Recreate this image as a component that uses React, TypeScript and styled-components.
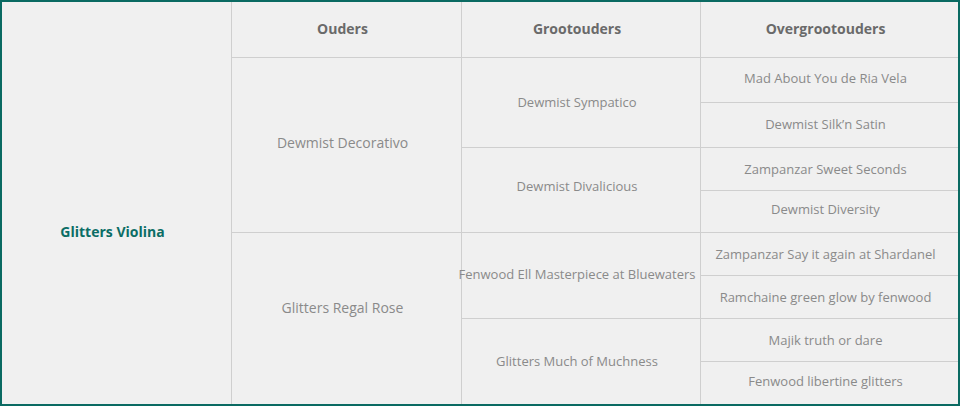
import React from 'react';
import styled, {createGlobalStyle} from 'styled-components';

const GlobalStyle = createGlobalStyle`
  html, body {
    margin: 0;
    padding: 0;
    background: #ffffff;
  }
  * {
    box-sizing: border-box;
  }
`;

type Generation = 'self' | 'parent' | 'grand' | 'great';

type Horse = {name: string; lift: number};

const Pedigree = styled.div`
  width: 960px;
  border: 2px solid #0a6a62;
  background: #f0f0f0;
  display: grid;
  grid-template-columns: 229px 230px 239px 258px;
  grid-template-rows: 55px 45px 45px 43px 42px 43px 43px 43px 43px;
  font-family: 'Open Sans', 'DejaVu Sans', sans-serif;
`;

const HeaderCell = styled.div<{$col: number; $first?: boolean}>`
  grid-column: ${p => p.$col};
  grid-row: 1;
  display: flex;
  align-items: center;
  justify-content: center;
  padding: 0 8px 2px 0;
  border-left: ${p => (p.$first ? 'none' : '1px solid #cfcfcf')};
  font-size: 14px;
  font-weight: 700;
  color: #6a6a6a;
`;

// lift: how many px the name sits above the middle of its cell
const Cell = styled.div<{
  $col: number;
  $row: number;
  $span: number;
  $gen: Generation;
  $lift: number;
}>`
  grid-column: ${p => p.$col};
  grid-row: ${p => p.$row} / span ${p => p.$span};
  display: flex;
  align-items: center;
  justify-content: center;
  text-align: center;
  white-space: nowrap;
  padding-right: 8px;
  padding-top: ${p => (p.$lift < 0 ? -p.$lift * 2 : 0)}px;
  padding-bottom: ${p => (p.$lift > 0 ? p.$lift * 2 : 0)}px;
  border-left: ${p => (p.$gen === 'self' ? 'none' : '1px solid #cfcfcf')};
  border-top: ${p => (p.$gen === 'self' ? 'none' : '1px solid #cfcfcf')};
  font-size: ${p => (p.$gen === 'self' || p.$gen === 'parent' ? '14px' : '13px')};
  font-weight: ${p => (p.$gen === 'self' ? 700 : 400)};
  color: ${p => (p.$gen === 'self' ? '#0b6d65' : '#8a8a8a')};
`;

const parents: Horse[] = [
  {name: 'Dewmist Decorativo', lift: 3},
  {name: 'Glitters Regal Rose', lift: 11},
];
const grandparents: Horse[] = [
  {name: 'Dewmist Sympatico', lift: 1},
  {name: 'Dewmist Divalicious', lift: 4},
  {name: 'Fenwood Ell Masterpiece at Bluewaters', lift: 2},
  {name: 'Glitters Much of Muchness', lift: 1},
];
const greatGrandparents: Horse[] = [
  {name: 'Mad About You de Ria Vela', lift: 2},
  {name: 'Dewmist Silk’n Satin', lift: 1},
  {name: 'Zampanzar Sweet Seconds', lift: 0},
  {name: 'Dewmist Diversity', lift: 3},
  {name: 'Zampanzar Say it again at Shardanel', lift: 0},
  {name: 'Ramchaine green glow by fenwood', lift: 0},
  {name: 'Majik truth or dare', lift: 0},
  {name: 'Fenwood libertine glitters', lift: 2},
];

export default function App() {
  return (
    <>
      <GlobalStyle />
      <Pedigree>
        <HeaderCell $col={1} $first />
        <HeaderCell $col={2}>Ouders</HeaderCell>
        <HeaderCell $col={3}>Grootouders</HeaderCell>
        <HeaderCell $col={4}>Overgrootouders</HeaderCell>

        <Cell $col={1} $row={2} $span={8} $gen="self" $lift={-1}>
          Glitters Violina
        </Cell>
        {parents.map((h, i) => (
          <Cell key={h.name} $col={2} $row={2 + i * 4} $span={4} $gen="parent" $lift={h.lift}>
            {h.name}
          </Cell>
        ))}
        {grandparents.map((h, i) => (
          <Cell key={h.name} $col={3} $row={2 + i * 2} $span={2} $gen="grand" $lift={h.lift}>
            {h.name}
          </Cell>
        ))}
        {greatGrandparents.map((h, i) => (
          <Cell key={h.name} $col={4} $row={2 + i} $span={1} $gen="great" $lift={h.lift}>
            {h.name}
          </Cell>
        ))}
      </Pedigree>
    </>
  );
}
